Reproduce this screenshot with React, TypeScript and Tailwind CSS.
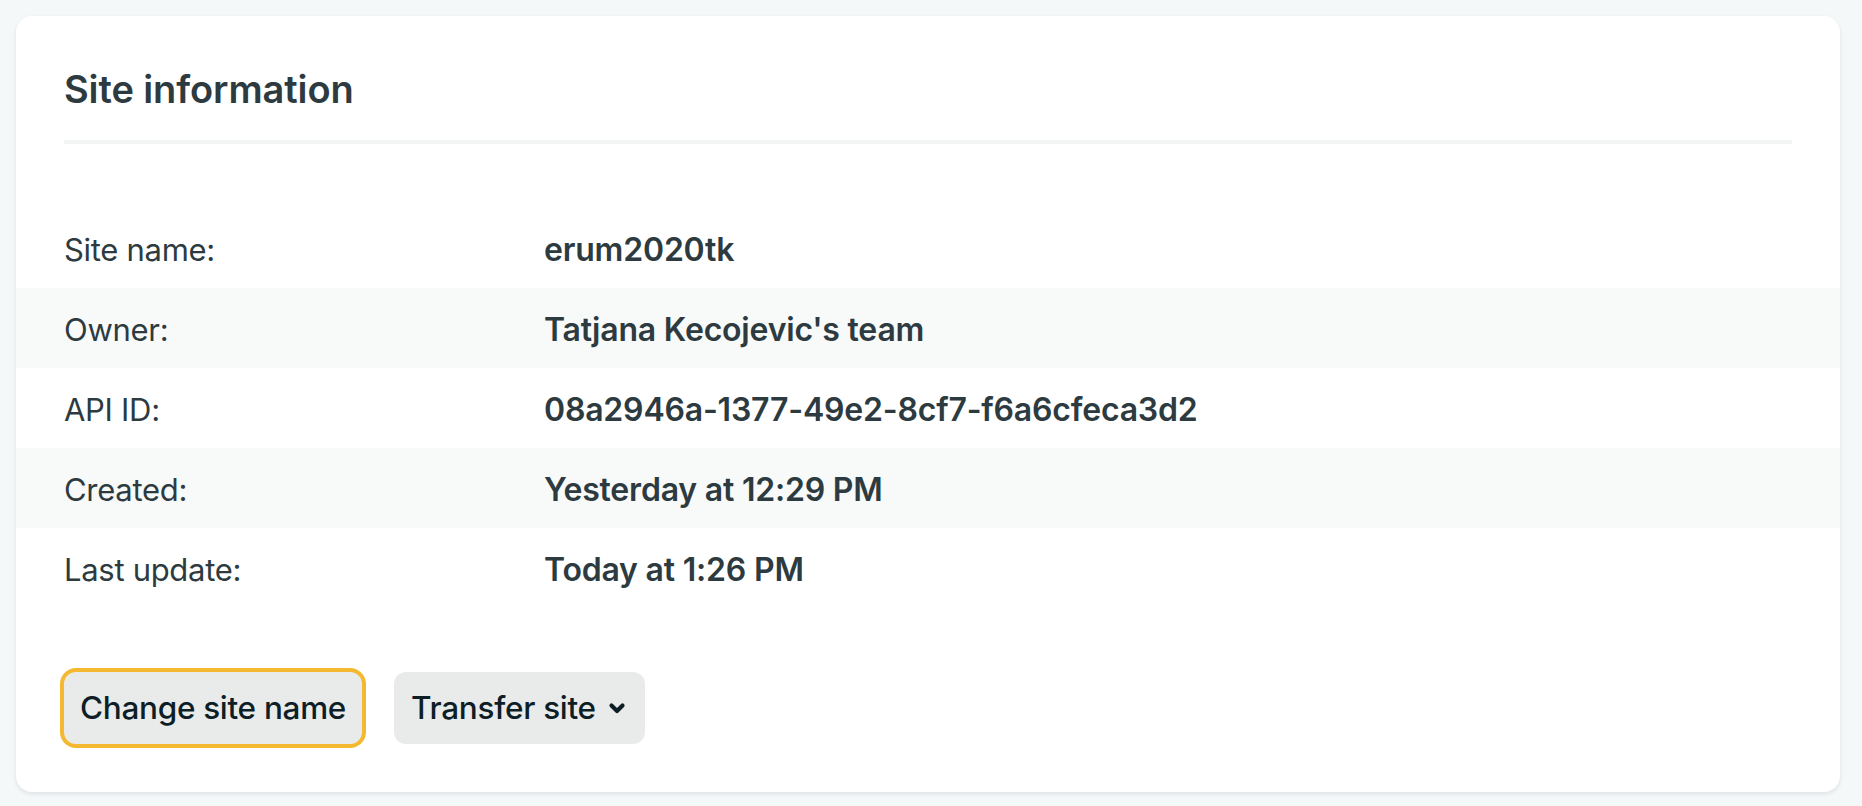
import React from 'react'

const rows = [
  { label: 'Site name:', value: 'erum2020tk' },
  { label: 'Owner:', value: "Tatjana Kecojevic's team" },
  { label: 'API ID:', value: '08a2946a-1377-49e2-8cf7-f6a6cfeca3d2' },
  { label: 'Created:', value: 'Yesterday at 12:29 PM' },
  { label: 'Last update:', value: 'Today at 1:26 PM' },
]

function Chevron() {
  return (
    <svg width="18" height="13" viewBox="0 0 18 13" fill="none" className="ml-3 shrink-0">
      <path d="M3.5 3.5 L9 9 L14.5 3.5" stroke="#0e1e26" strokeWidth="4.2" strokeLinecap="round" strokeLinejoin="round" />
    </svg>
  )
}

export default function App() {
  return (
    <div
      className="min-h-screen bg-[#f5f8f9] pt-4 pb-[14px] pl-4 pr-[22px] text-[#2d3b41]"
      style={{ fontFamily: 'Inter, "Noto Sans", sans-serif' }}
    >
      <div className="rounded-2xl bg-white shadow-[0_2px_4px_rgba(14,30,37,0.10)]">
        {/* header */}
        <div className="px-12 pt-[50px]">
          <h2 className="text-[38px] leading-[46px] font-semibold tracking-[-0.1px] text-[#2d3b41]">
            Site information
          </h2>
          <div className="mt-[28px] h-[4px] bg-[#f3f5f5]" />
        </div>

        {/* details */}
        <div className="mt-16">
          {rows.map((row, i) => (
            <div
              key={row.label}
              className={`flex h-20 items-center px-12 pt-[3px] leading-9 ${
                i % 2 === 1 ? 'bg-[#f8f9f9]' : 'bg-white'
              }`}
            >
              <div className="w-[480px] shrink-0 text-[31px] font-normal tracking-[-0.3px]">{row.label}</div>
              <div className="text-[32px] font-semibold tracking-[-0.2px]">{row.value}</div>
            </div>
          ))}
        </div>

        {/* actions */}
        <div className="flex items-center gap-8 px-12 pt-16 pb-12">
          <button
            type="button"
            className="h-[72px] rounded-xl bg-[#e9ebeb] px-4 text-[31.5px] font-medium tracking-[-0.3px] text-[#0e1e26] ring-4 ring-[#f4b930]"
          >
            Change site name
          </button>
          <button
            type="button"
            className="flex h-[72px] items-center rounded-xl bg-[#e9ebeb] pl-[17px] pr-[19px] text-[31.5px] font-medium tracking-[-0.3px] text-[#0e1e26]"
          >
            Transfer site
            <Chevron />
          </button>
        </div>
      </div>
    </div>
  )
}
